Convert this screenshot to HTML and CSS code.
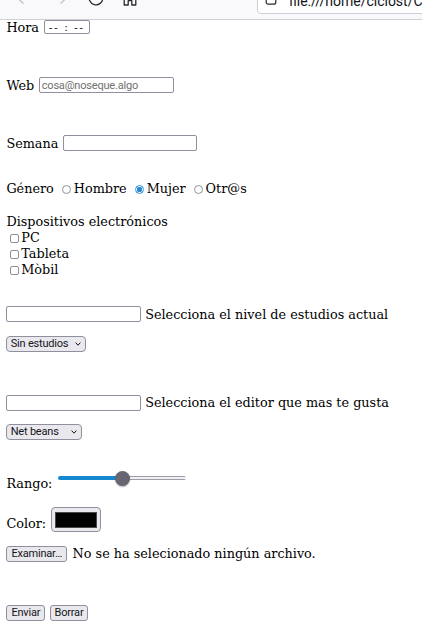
FILE: index.html
```html
<!DOCTYPE html>
<html lang="es">
<head>
<meta charset="utf-8">
<title>Formulario</title>
<link rel="stylesheet" href="styles.css">
</head>
<body>
<div class="toolbar">
  <div class="toolbar-inner">
    <svg class="tb-icon back" width="16" height="16" viewBox="0 0 16 16"><path d="M14.5 8H1.8M7 2.8 1.8 8 7 13.2" fill="none" stroke="#c2c2c9" stroke-width="1.4" stroke-linecap="round" stroke-linejoin="round"/></svg>
    <svg class="tb-icon fwd" width="16" height="16" viewBox="0 0 16 16"><path d="M1.5 8h12.7M9 2.8 14.2 8 9 13.2" fill="none" stroke="#c2c2c9" stroke-width="1.4" stroke-linecap="round" stroke-linejoin="round"/></svg>
    <svg class="tb-icon reload" width="16" height="16" viewBox="0 0 16 16"><path d="M14.8 8A6.8 6.8 0 1 1 12.6 3" fill="none" stroke="#2b2a33" stroke-width="1.3" stroke-linecap="round"/><path d="M13.4 0.8v3h-3" fill="none" stroke="#2b2a33" stroke-width="1.3" stroke-linecap="round" stroke-linejoin="round"/></svg>
    <svg class="tb-icon home" width="16" height="16" viewBox="0 0 16 16"><path d="M2.2 7.2 8 2l5.8 5.2V15H9.8v-4.3H6.2V15H2.2z" fill="none" stroke="#2b2a33" stroke-width="1.3" stroke-linejoin="round"/></svg>
    <div class="urlbar">
      <svg class="page-icon" width="12" height="14" viewBox="0 0 12 14"><rect x="1.2" y="0.8" width="9.6" height="12.4" rx="2" fill="none" stroke="#2b2a33" stroke-width="1.2"/></svg>
      <span class="url">file:///home/ciclost/Clase/formulario.html</span>
    </div>
  </div>
</div>

<form class="page">
  <div class="row r-hora"><span class="lbl hora-lbl">Hora</span><span class="time">-- : --</span></div>

  <div class="row r-web"><span class="lbl">Web</span><input class="text w135" type="text" placeholder="cosa@noseque.algo"></div>

  <div class="row r-semana"><span class="lbl">Semana</span><input class="text w134" type="text"></div>

  <div class="line r-genero">Género <input class="radio" type="radio" name="genero">Hombre <input class="radio" type="radio" name="genero" checked>Mujer <input class="radio" type="radio" name="genero">Otr@s</div>

  <div class="line r-disp">Dispositivos electrónicos</div>
  <div class="line r-check first"><input class="check" type="checkbox">PC</div>
  <div class="line r-check"><input class="check" type="checkbox">Tableta</div>
  <div class="line r-check"><input class="check" type="checkbox">Mòbil</div>

  <div class="row r-in1"><input class="text w134" type="text"><span class="lbl">Selecciona el nivel de estudios actual</span></div>
  <div class="row r-sel1"><div class="select s80"><span>Sin estudios</span><svg class="chev" width="6" height="4" viewBox="0 0 6 4"><path d="M0.6 0.6 3 3.2 5.4 0.6" fill="none" stroke="#15141a" stroke-width="1"/></svg></div></div>

  <div class="row r-in2"><input class="text w134" type="text"><span class="lbl">Selecciona el editor que mas te gusta</span></div>
  <div class="row r-sel2"><div class="select s76"><span>Net beans</span><svg class="chev" width="6" height="4" viewBox="0 0 6 4"><path d="M0.6 0.6 3 3.2 5.4 0.6" fill="none" stroke="#15141a" stroke-width="1"/></svg></div></div>

  <div class="row r-range"><span class="lbl range-lbl">Rango:</span><input class="range" type="range" min="0" max="100" value="50"></div>

  <div class="row r-color"><span class="lbl color-lbl">Color:</span><button class="color-btn" type="button"><span class="swatch"></span></button></div>

  <div class="row r-file"><button class="btn" type="button">Examinar…</button><span class="lbl file-lbl">No se ha selecionado ningún archivo.</span></div>

  <div class="row r-btns"><button class="btn" type="submit">Enviar</button><button class="btn" type="reset">Borrar</button></div>
</form>
</body>
</html>
```

FILE: styles.css
```css
html, body {
  margin: 0;
  padding: 0;
  background: #ffffff;
}
body {
  font-family: "DejaVu Serif", serif;
  font-size: 12.8px;
  color: #000;
  overflow: hidden;
  height: 629px;
}

/* browser toolbar strip */
.toolbar {
  height: 19px;
  background: #f9f9fb;
  border-bottom: 1px solid #cfcfd8;
  overflow: hidden;
}
.toolbar-inner {
  display: flex;
  align-items: center;
  gap: 20px;
  height: 29px;
  margin-top: -17px;
}
.tb-icon { flex: none; }
.back { margin-left: 15.5px; }
.fwd { margin-left: 0.5px; }
.home { margin-left: -2px; }
.urlbar {
  flex: none;
  align-self: flex-end;
  margin-bottom: -2px;
  margin-left: 99px;
  width: 230px;
  height: 30px;
  box-sizing: border-box;
  border: 1px solid #cfcfd8;
  border-radius: 4px;
  background: #ffffff;
  display: flex;
  align-items: center;
  padding: 3px 0 0 7px;
}
.page-icon { flex: none; margin-bottom: 5px; }
.url {
  margin-left: 12px;
  font-family: Roboto, "Noto Sans", sans-serif;
  font-size: 14px;
  color: #15141a;
  white-space: nowrap;
}

/* page content */
.page {
  margin: 0;
  padding: 0 0 0 6.4px;
}
.row {
  display: flex;
  align-items: center;
  gap: 4.5px;
}
.line {
  line-height: 16px;
  white-space: nowrap;
}
.lbl { white-space: nowrap; }
.hora-lbl { margin-top: 1px; }

.r-hora { height: 14px; }
.r-web { margin-top: 43.3px; }
.r-semana { margin-top: 42px; }
.r-genero { margin-top: 30.2px; }
.r-disp { margin-top: 17px; }
.r-check.first { margin-top: 0; }
.r-in1 { margin-top: 28px; }
.r-sel1 { margin-top: 13.3px; }
.r-in2 { margin-top: 42.6px; }
.r-sel2 { margin-top: 13px; }
.r-range { margin-top: 30.7px; align-items: flex-start; gap: 6px; }
.r-color { margin-top: 16px; }
.r-file { margin-top: 14px; gap: 5.5px; }
.r-btns { margin-top: 42px; gap: 4.3px; }

/* widgets */
.time {
  box-sizing: border-box;
  width: 46.4px;
  height: 14.5px;
  border: 1px solid #8f8f9d;
  border-radius: 2px;
  background: #fff;
  font-family: "DejaVu Sans", sans-serif;
  font-size: 10.5px;
  line-height: 12.5px;
  letter-spacing: 1.5px;
  text-align: center;
  color: #15141a;
}
.text {
  box-sizing: border-box;
  height: 16px;
  margin: 0;
  padding: 0 2px;
  border: 1px solid #8f8f9d;
  border-radius: 2px;
  background: #fff;
  font-family: Roboto, "Noto Sans", sans-serif;
  font-size: 11px;
  letter-spacing: -0.2px;
  color: #15141a;
  outline: none;
}
.text::placeholder { color: #707070; opacity: 1; }
.w135 { width: 135px; }
.w134 { width: 134.3px; }

.radio {
  -webkit-appearance: none;
  appearance: none;
  box-sizing: border-box;
  width: 9.5px;
  height: 9.5px;
  margin: 0 2.4px 0 4px;
  border: 1px solid #8f8f9d;
  border-radius: 50%;
  background: #fff;
  vertical-align: -1px;
}
.radio:checked {
  border-color: #3b95da;
  background: radial-gradient(circle, #2a8ad6 0 2.5px, #ffffff 3px 3.3px, #58a8e6 3.7px);
}
.check {
  -webkit-appearance: none;
  appearance: none;
  box-sizing: border-box;
  width: 9.3px;
  height: 9.3px;
  margin: 0 2.4px 0 3.2px;
  border: 1px solid #8f8f9d;
  border-radius: 2px;
  background: #fff;
  vertical-align: -0.5px;
}

.select {
  box-sizing: border-box;
  height: 16.4px;
  border: 1px solid #8f8f9d;
  border-radius: 4px;
  background: #e9e9ed;
  display: flex;
  align-items: center;
  justify-content: space-between;
  padding: 0 4.5px 0 3.3px;
  font-family: Roboto, "Noto Sans", sans-serif;
  font-size: 11px;
  letter-spacing: -0.2px;
  color: #15141a;
}
.s80 { width: 80px; }
.s76 { width: 76px; }
.chev { flex: none; }

.range-lbl { margin-top: 5.6px; }
.range {
  -webkit-appearance: none;
  appearance: none;
  width: 128px;
  height: 15px;
  margin: 0;
  background: transparent;
}
.range::-webkit-slider-runnable-track {
  height: 4px;
  border-radius: 2px;
  background:
    linear-gradient(#1688d2, #1688d2) left center / 50% 100% no-repeat,
    linear-gradient(#9d9da8 0 1px, #f0f0f4 1px 3px, #9d9da8 3px);
}
.range::-webkit-slider-thumb {
  -webkit-appearance: none;
  appearance: none;
  width: 15px;
  height: 15px;
  margin-top: -5.5px;
  border: none;
  border-radius: 50%;
  background: #676773;
  box-shadow: 0 1px 1.5px rgba(0, 0, 0, 0.3);
}

.color-lbl { margin-top: 7px; }
.color-btn {
  box-sizing: border-box;
  width: 50.7px;
  height: 24.4px;
  margin: 0;
  padding: 3px 3px;
  border: 1px solid #8f8f9d;
  border-radius: 4px;
  background: #e9e9ed;
  display: flex;
  align-items: center;
  justify-content: center;
}
.swatch {
  display: block;
  width: 43px;
  height: 16px;
  box-sizing: border-box;
  background: #000;
  border: 1px solid #4a4a4a;
}

.btn {
  box-sizing: border-box;
  height: 16px;
  margin: 0;
  padding: 0 4px;
  border: 1px solid #8f8f9d;
  border-radius: 3px;
  background: #e9e9ed;
  font-family: Roboto, "Noto Sans", sans-serif;
  font-size: 11px;
  letter-spacing: -0.2px;
  line-height: 14px;
  color: #15141a;
}
.file-lbl { margin-bottom: 2px; }
```
